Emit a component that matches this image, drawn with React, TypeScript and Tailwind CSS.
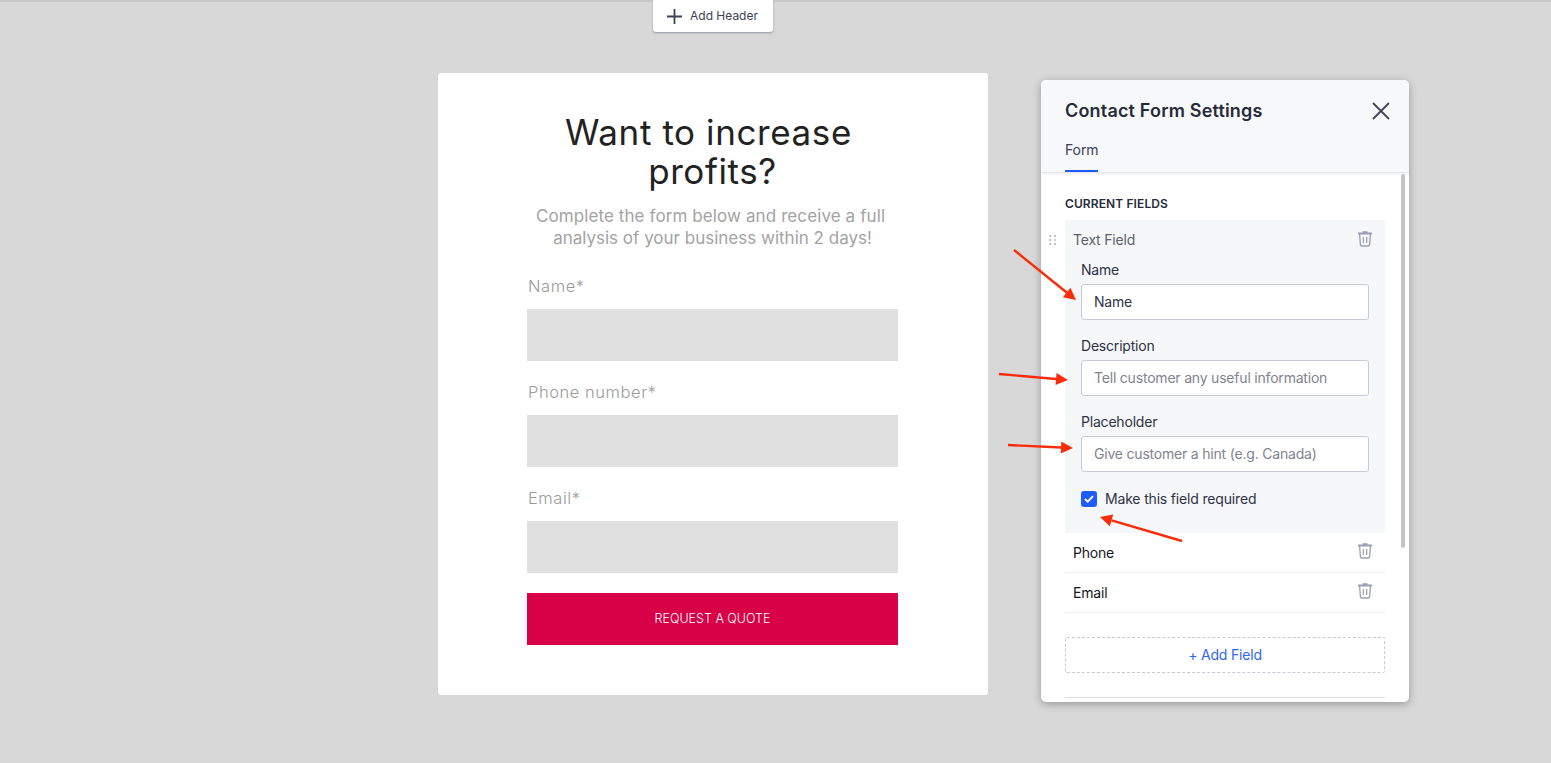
const Plus = () => (
    <svg width="15" height="15" viewBox="0 0 15 15" fill="none" className="text-[#3b4157]">
        <path d="M7.5 0v15M0 7.5h15" stroke="currentColor" strokeWidth="1.8" />
    </svg>
)

const Close = () => (
    <svg width="18" height="18" viewBox="0 0 18 18" fill="none" className="text-[#434859]">
        <path d="M1 1l16 16M17 1L1 17" stroke="currentColor" strokeWidth="1.9" />
    </svg>
)

const Trash = () => (
    <svg width="16" height="17" viewBox="0 0 16 17" fill="none" className="text-[#9a9fb2]">
        <path d="M1 3.5h14" stroke="currentColor" strokeWidth="1.8" />
        <path d="M5.5 3V1.2h5V3" fill="currentColor" />
        <path d="M2.6 4l.8 10.6c.1.9.6 1.4 1.5 1.4h6.2c.9 0 1.4-.5 1.5-1.4L13.4 4" stroke="currentColor" strokeWidth="1.3" />
        <path d="M6.3 7v6M9.7 7v6" stroke="currentColor" strokeWidth="1.2" />
    </svg>
)

const Grip = () => (
    <svg width="8" height="10" viewBox="0 0 8 10" className="text-[#c3c7d3]" fill="currentColor">
        <rect x="0" y="0" width="2" height="2" />
        <rect x="5" y="0" width="2" height="2" />
        <rect x="0" y="4" width="2" height="2" />
        <rect x="5" y="4" width="2" height="2" />
        <rect x="0" y="8" width="2" height="2" />
        <rect x="5" y="8" width="2" height="2" />
    </svg>
)

const Arrow = ({ x1, y1, x2, y2 }: { x1: number; y1: number; x2: number; y2: number }) => {
    const a = Math.atan2(y2 - y1, x2 - x1)
    const len = 12
    const w = 6
    const bx = x2 - Math.cos(a) * len
    const by = y2 - Math.sin(a) * len
    const px = -Math.sin(a) * w
    const py = Math.cos(a) * w
    return (
        <g>
            <line x1={x1} y1={y1} x2={bx} y2={by} stroke="#fb2c0a" strokeWidth="2.4" />
            <polygon points={`${x2},${y2} ${bx + px},${by + py} ${bx - px},${by - py}`} fill="#fb2c0a" />
        </g>
    )
}

const FormField = ({ label }: { label: string }) => (
    <div>
        <div className="h-[24px] pl-px text-[16.5px] font-light leading-[24px] tracking-[0.55px] text-[#9b9b9b]">{label}</div>
        <div className="mt-[11px] h-[52px] bg-[#e0e0e0]" />
    </div>
)

const SettingInput = ({ label, value, placeholder }: { label: string; value?: string; placeholder?: string }) => (
    <div>
        <div className="text-sm leading-[20px] tracking-[-0.2px] text-[#2d3345]">{label}</div>
        <input
            readOnly
            value={value}
            placeholder={placeholder}
            className="mt-[4px] block h-[36px] w-[288px] rounded-[3px] border border-[#c5c9d8] bg-white px-3 pb-[2px] text-[14px] tracking-[-0.2px] text-[#2d3345] placeholder:text-[#80848f]"
        />
    </div>
)

const FieldRow = ({ name }: { name: string }) => (
    <div className="flex h-[40px] items-center justify-between border-b border-[#eceef2] pl-2 pr-[12px]">
        <span className="text-sm tracking-[-0.2px] text-[#15171c]">{name}</span>
        <span className="-mt-1"><Trash /></span>
    </div>
)

export default function App() {
    return (
        <div className="relative h-[763px] overflow-hidden bg-[#d8d8d8] font-['Inter',sans-serif] antialiased">
            <div className="absolute inset-x-0 top-0 h-[2px] bg-[#c8c8c8]" />

            <div className="flex pl-[438px]">
                {/* canvas */}
                <div className="w-[550px]">
                    <div className="ml-[215px]">
                        <button className="relative flex h-[32px] w-[120px] items-center gap-[8px] rounded-b-[3px] bg-white pl-[14px] text-xs text-[#3b4157] shadow-[0_1px_2px_rgba(60,70,100,0.45)]">
                            <Plus />
                            <span>Add Header</span>
                        </button>
                    </div>

                    <div className="mt-[41px] h-[622px] rounded-[3px] bg-white pt-[40px] text-center">
                        <h1 className="ml-[89px] w-[371px] text-[35px] font-normal leading-[39px] tracking-[0.6px] text-[#222222]">
                            <span className="block pr-[8px]">Want to increase</span>
                            <span className="block">profits?</span>
                        </h1>
                        <p className="ml-[89px] mt-[14px] w-[371px] text-[17px] font-normal leading-[22px] tracking-[0.1px] text-[#a3a3a3]">
                            <span className="block pr-[4px]">Complete the form below and receive a full</span>
                            <span className="block tracking-[0px]">analysis of your business within 2 days!</span>
                        </p>

                        <div className="ml-[89px] mt-[25px] flex w-[371px] flex-col gap-[19px] text-left">
                            <FormField label="Name*" />
                            <FormField label="Phone number*" />
                            <FormField label="Email*" />
                        </div>
                        <button className="ml-[89px] mt-[20px] block h-[52px] w-[371px] bg-[#d80046] text-[12.5px] font-light text-white">
                            REQUEST A QUOTE
                        </button>
                    </div>
                </div>

                {/* settings panel */}
                <div className="relative ml-[53px] mt-[80px] h-[622px] w-[368px] overflow-hidden rounded-[5px] bg-white shadow-[0_2px_8px_rgba(0,0,0,0.3)]">
                    <div className="h-[93px] border-b border-[#e6e8ec] bg-[#f7f8fa] px-6 shadow-[0_1px_3px_rgba(0,0,0,0.08)]">
                        <div className="flex items-center justify-between pt-[17px]">
                            <h2 className="text-lg font-semibold leading-[28px] tracking-[0.18px] text-[#262b3a]">Contact Form Settings</h2>
                            <span className="mr-[-5px]"><Close /></span>
                        </div>
                        <div className="mt-[15px] inline-block h-[32px] border-b-2 border-[#1f5cff] text-sm leading-[20px] tracking-[-0.1px] text-[#3b4157]">Form</div>
                    </div>

                    <div className="px-6 pt-[23px]">
                        <div className="text-xs font-semibold leading-[16px] tracking-[0.1px] text-[#262b3a]">CURRENT FIELDS</div>

                        <div className="relative mt-[8px] h-[313px] w-[320px] bg-[#f6f7f9] px-2 pt-[10px]">
                            <span className="absolute -left-[16px] top-[15px]"><Grip /></span>
                            <div className="flex items-center justify-between pr-[4px]">
                                <span className="text-sm leading-[20px] tracking-[-0.2px] text-[#5a5f70]">Text Field</span>
                                <span className="-mt-1"><Trash /></span>
                            </div>
                            <div className="mt-[10px] flex flex-col gap-[16px] pl-2">
                                <SettingInput label="Name" value="Name" />
                                <SettingInput label="Description" placeholder="Tell customer any useful information" />
                                <SettingInput label="Placeholder" placeholder="Give customer a hint (e.g. Canada)" />
                            </div>
                            <div className="mt-[17px] flex items-center gap-2 pl-2">
                                <span className="flex size-[16px] items-center justify-center rounded-[3px] bg-[#1f5cff]">
                                    <svg width="10" height="8" viewBox="0 0 10 8" fill="none">
                                        <path d="M1 4l2.7 2.7L9 1.2" stroke="white" strokeWidth="1.8" />
                                    </svg>
                                </span>
                                <span className="text-sm tracking-[-0.17px] text-[#2d3345]">Make this field required</span>
                            </div>
                        </div>

                        <div className="w-[320px]">
                            <FieldRow name="Phone" />
                            <FieldRow name="Email" />
                        </div>

                        <div className="mt-[24px] flex h-[36px] w-[320px] items-center justify-center rounded-[2px] border border-dashed border-[#c5c9d8] text-sm tracking-[-0.2px] text-[#2f66f5]">
                            + Add Field
                        </div>

                        <div className="mt-[24px] w-[320px] border-t border-[#dcdde0]" />
                    </div>

                    {/* scrollbar */}
                    <div className="absolute left-[360px] top-[94px] h-[374px] w-[4px] rounded-full bg-[#c4c4c4]" />
                </div>
            </div>

            {/* annotation arrows drawn over the page */}
            <svg className="pointer-events-none absolute inset-0" width="1551" height="763">
                <Arrow x1={1014} y1={250} x2={1076} y2={300} />
                <Arrow x1={999} y1={374} x2={1068} y2={380} />
                <Arrow x1={1008} y1={445} x2={1073} y2={448} />
                <Arrow x1={1182} y1={541} x2={1100} y2={517} />
            </svg>
        </div>
    )
}
